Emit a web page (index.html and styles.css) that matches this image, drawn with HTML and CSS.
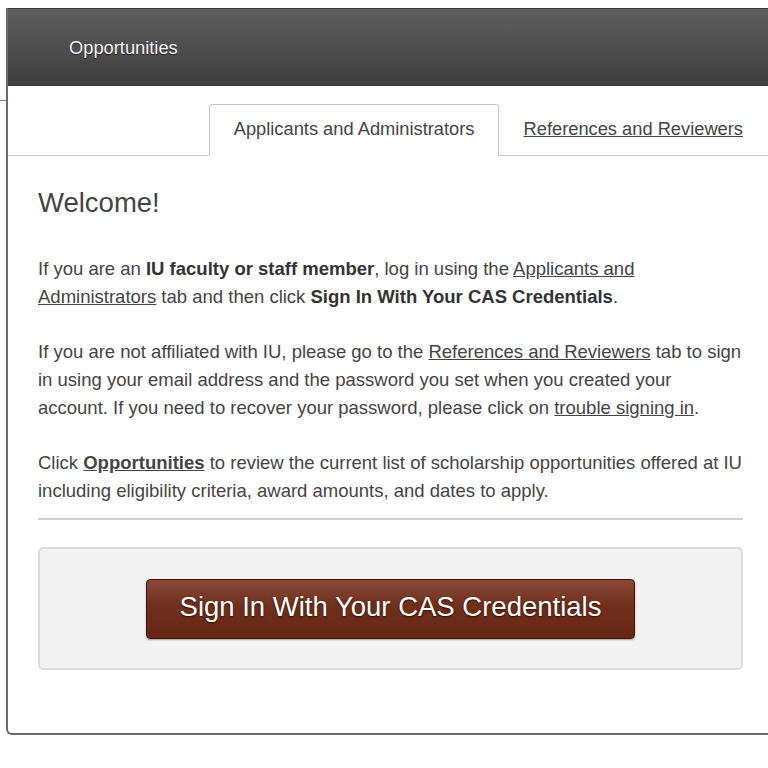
FILE: index.html
```html
<!DOCTYPE html>
<html lang="en">
<head>
<meta charset="utf-8">
<title>Welcome</title>
<link rel="stylesheet" href="styles.css">
</head>
<body>
<div class="edge-mark"></div>
<div class="panel">
  <div class="header">
    <a class="nav-link" href="#">Opportunities</a>
  </div>
  <div class="tabs">
    <div class="tab active">Applicants and Administrators</div>
    <div class="tab"><a href="#">References and Reviewers</a></div>
  </div>
  <div class="content">
    <h1 class="title">Welcome!</h1>
    <p>If you are an <b>IU faculty or staff member</b>, log in using the <a href="#">Applicants and Administrators</a> tab and then click <b>Sign In With Your CAS Credentials</b>.</p>
    <p>If you are not affiliated with IU, please go to the <a href="#">References and Reviewers</a> tab to sign in using your email address and the password you set when you created your account. If you need to recover your password, please click on <a href="#">trouble signing in</a>.</p>
    <p>Click <a href="#" class="strong-link">Opportunities</a> to review the current list of scholarship opportunities offered at IU including eligibility criteria, award amounts, and dates to apply.</p>
    <hr class="rule">
    <div class="signin-box">
      <button class="cas-btn">Sign In With Your CAS Credentials</button>
    </div>
  </div>
</div>
</body>
</html>
```

FILE: styles.css
```css
html, body {
  margin: 0;
  padding: 0;
  background: #ffffff;
  overflow: hidden;
}
body {
  font-family: "Liberation Sans", Arial, sans-serif;
  color: #444;
  width: 768px;
  height: 768px;
  position: relative;
}
.edge-mark {
  position: absolute;
  left: 0;
  top: 100px;
  width: 6px;
  height: 1px;
  background: #b07050;
}
.panel {
  margin-left: 6px;
  margin-top: 8px;
  border-left: 2px solid #6a6a6a;
  border-bottom: 2px solid #6a6a6a;
  border-bottom-left-radius: 6px;
  height: 727px;
  box-sizing: border-box;
}
.header {
  height: 78px;
  background: linear-gradient(#5f5f5f, #3c3c3c);
  border-top: 1px solid #3a3a3a;
  box-sizing: border-box;
  display: flex;
  align-items: center;
  padding-left: 61px;
}
.nav-link {
  color: #f2f2f2;
  text-decoration: none;
  font-size: 18.3px;
  text-shadow: 0 1px 1px #222;
}
.tabs {
  margin-top: 18px;
  height: 51px;
  display: flex;
  justify-content: flex-end;
  border-bottom: 1px solid #c8c8c8;
}
.tab {
  font-size: 18.3px;
  color: #444;
  padding: 0 25px 2px;
  display: flex;
  align-items: center;
  box-sizing: border-box;
}
.tab.active {
  background: #fff;
  border: 1px solid #c8c8c8;
  border-bottom: 1px solid #fff;
  border-radius: 3px 3px 0 0;
  margin-bottom: -1px;
  padding: 0 23px 2px 24px;
}
.tab a {
  color: #444;
}
.content {
  padding: 31px 25px 0 30px;
}
.title {
  font-size: 27.5px;
  font-weight: normal;
  line-height: 32px;
  margin: 0 0 36px;
  color: #444;
}
.content p {
  font-size: 18.5px;
  line-height: 28px;
  margin: 0 0 27px;
}
.content p:last-of-type {
  margin-bottom: 13px;
}
.content a {
  color: #444;
}
.content b, .strong-link {
  font-weight: bold;
  color: #333;
}
.rule {
  border: 0;
  height: 2px;
  background: #d0d0d0;
  margin: 0 0 27px;
}
.signin-box {
  background: #f2f2f2;
  border: 2px solid #dcdcdc;
  border-radius: 5px;
  height: 123px;
  box-sizing: border-box;
  display: flex;
  justify-content: center;
  padding-top: 30px;
}
.cas-btn {
  width: 489px;
  height: 60px;
  font-family: "Liberation Sans", Arial, sans-serif;
  font-size: 27.5px;
  color: #fff;
  text-shadow: 0 1px 2px #2a0f05;
  background: linear-gradient(#8b4a38, #6e2f1c 45%, #672714);
  border: 1px solid #3b1a0e;
  border-radius: 4px;
  box-shadow: 0 1px 2px rgba(0,0,0,0.35);
  cursor: pointer;
  padding: 0 0 4px;
}
```
